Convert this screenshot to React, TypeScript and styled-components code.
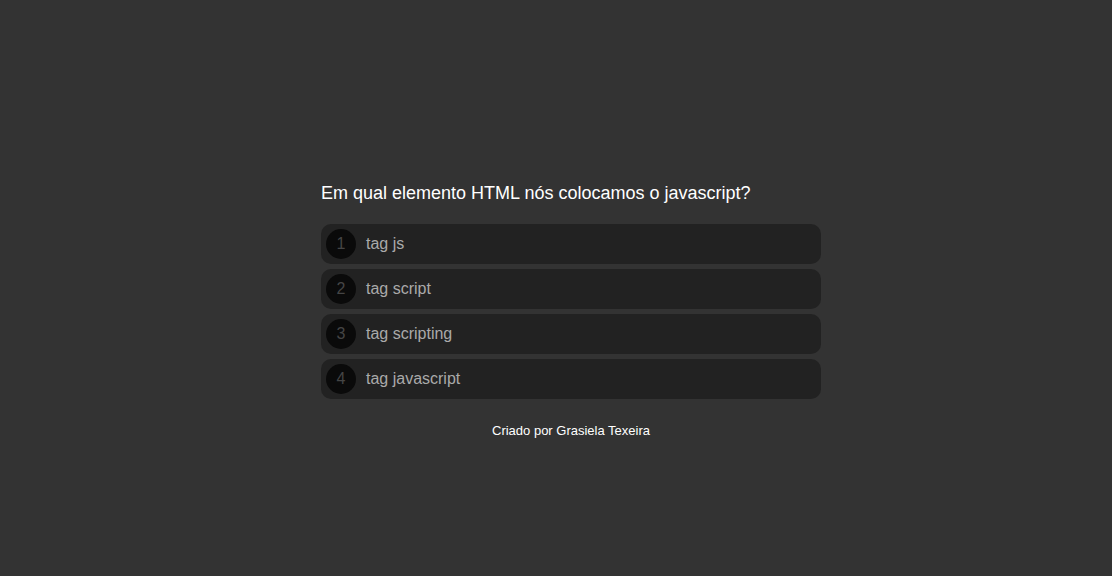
import * as React from "react";
import styled, { createGlobalStyle } from "styled-components";

const answers = ["tag js", "tag script", "tag scripting", "tag javascript"];

const App = (): JSX.Element => {
  return (
    <>
      <GlobalStyle />
      <Page>
        <Quiz.Container>
          <Quiz.Question>Em qual elemento HTML nós colocamos o javascript?</Quiz.Question>
          <Quiz.List>
            {answers.map((answer, i) => (
              <Quiz.Answer key={answer}>
                <Quiz.Number>{i + 1}</Quiz.Number>
                <Quiz.Text>{answer}</Quiz.Text>
              </Quiz.Answer>
            ))}
          </Quiz.List>
          <Footer>Criado por Grasiela Texeira</Footer>
        </Quiz.Container>
      </Page>
    </>
  );
};

export default App;

const GlobalStyle = createGlobalStyle`
  html, body {
    margin: 0;
    padding: 0;
    background-color: #333333;
    font-family: "Liberation Sans", Arial, sans-serif;
  }
`;

const Page = styled.div`
  min-height: 100vh;
  box-sizing: border-box;
  display: flex;
  justify-content: center;
  padding: 182px 0 0 30px;
`;

const Quiz = {
  Container: styled.div`
    width: 500px;
  `,

  Question: styled.h1`
    margin: 0 0 20px 0;
    font-size: 18px;
    font-weight: normal;
    line-height: 22px;
    color: #ffffff;
  `,

  List: styled.div`
    display: flex;
    flex-direction: column;
    gap: 5px;
  `,

  Answer: styled.div`
    display: flex;
    align-items: center;
    height: 40px;
    padding: 0 5px;
    border-radius: 10px;
    background-color: #222222;
    cursor: pointer;
  `,

  Number: styled.div`
    width: 30px;
    height: 30px;
    border-radius: 50%;
    background-color: #0a0a0a;
    color: #454545;
    font-size: 16px;
    display: flex;
    align-items: center;
    justify-content: center;
    margin-right: 10px;
  `,

  Text: styled.span`
    font-size: 16px;
    color: #aaaaaa;
  `,
};

const Footer = styled.div`
  margin-top: 24px;
  text-align: center;
  font-size: 13px;
  line-height: 15px;
  color: #ffffff;
`;
